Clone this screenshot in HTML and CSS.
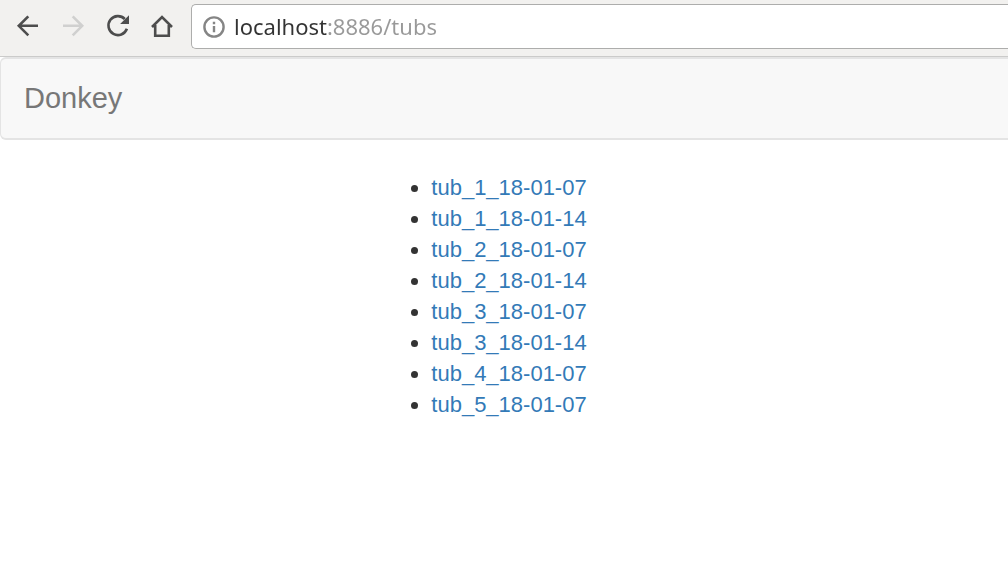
FILE: index.html
```html
<!DOCTYPE html>
<html lang="en">
<head>
<meta charset="utf-8">
<meta name="viewport" content="width=device-width, initial-scale=1">
<title>Donkey</title>
<link rel="stylesheet" href="styles.css">
</head>
<body>
<div class="toolbar">
  <button class="tool" type="button" aria-label="Back">
    <svg viewBox="0 0 24 24"><path d="M22 11.8H3M12.3 2.3L2.8 11.8l9.5 9.5"/></svg>
  </button>
  <button class="tool" type="button" aria-label="Forward" disabled>
    <svg viewBox="0 0 24 24"><path d="M2 11.8h19M11.7 2.3l9.5 9.5-9.5 9.5"/></svg>
  </button>
  <button class="tool" type="button" aria-label="Reload">
    <svg viewBox="0 0 24 24"><path d="M18.8 5A9.5 9.5 0 1 0 20.9 14.8"/><path class="solid" d="M23 1.2v8.9h-8.9z"/></svg>
  </button>
  <button class="tool" type="button" aria-label="Home">
    <svg viewBox="0 0 24 24"><path d="M1 13L11 3l10 10M4.2 11v10.8h13.6V11"/></svg>
  </button>
  <div class="address">
    <svg class="info" viewBox="0 0 22 22" aria-hidden="true"><circle cx="11" cy="11" r="9.6"/><path d="M11 10v6.2M11 5.8v2.4"/></svg>
    <input class="url" type="text" value="localhost:8886/tubs" aria-label="Address" spellcheck="false">
  </div>
</div>
<nav class="navbar"><a class="brand" href="#">Donkey</a></nav>
<main class="content">
  <ul class="tubs">
    <li><a href="#">tub_1_18-01-07</a></li>
    <li><a href="#">tub_1_18-01-14</a></li>
    <li><a href="#">tub_2_18-01-07</a></li>
    <li><a href="#">tub_2_18-01-14</a></li>
    <li><a href="#">tub_3_18-01-07</a></li>
    <li><a href="#">tub_3_18-01-14</a></li>
    <li><a href="#">tub_4_18-01-07</a></li>
    <li><a href="#">tub_5_18-01-07</a></li>
  </ul>
</main>
</body>
</html>
```
FILE: styles.css
```css
* {
  box-sizing: border-box;
}

body {
  margin: 0;
  background: #fff;
  color: #333;
  font-family: "Liberation Sans", Arial, sans-serif;
  font-size: 22px;
  line-height: 31px;
}

a {
  color: #337ab7;
  text-decoration: none;
}

.toolbar {
  display: flex;
  align-items: flex-start;
  padding: 4px 0 7px 5px;
  background: #f2f1ef;
  border-bottom: 1px solid #cbcbca;
}

.tool {
  display: flex;
  flex: none;
  align-items: center;
  justify-content: center;
  width: 45px;
  height: 44px;
  padding: 0;
  border: 0;
  background: none;
  color: #4d4d4d;
}

.tool:disabled {
  color: #d0d0cf;
}

.tool svg {
  width: 24px;
  height: 24px;
  fill: none;
  stroke: currentColor;
  stroke-width: 2.6;
}

.tool .solid {
  fill: currentColor;
  stroke: none;
}

.address {
  display: flex;
  flex: 1;
  align-items: center;
  gap: 9px;
  height: 45px;
  margin-left: 6px;
  padding-left: 11px;
  border: 1px solid #adadac;
  border-right: 0;
  border-radius: 5px 0 0 5px;
  background: #fff;
}

.info {
  flex: none;
  width: 22px;
  height: 22px;
  fill: none;
  stroke: #858585;
  stroke-width: 2.4;
}

/* The host is dark and the rest of the address is grey. */
.url {
  flex: 1;
  min-width: 0;
  height: 36px;
  padding: 0 0 2px;
  border: 0;
  outline: 0;
  background: linear-gradient(to right, #333 93px, #999 93px);
  background-clip: text;
  -webkit-background-clip: text;
  color: transparent;
  font-family: "Noto Sans", "Open Sans", sans-serif;
  font-size: 22px;
}

.navbar {
  padding: 24px 23px;
  border: 2px solid #e4e4e4;
  border-width: 2px 0 2px 1px;
  border-radius: 6px 0 0 6px;
  background: #f8f8f8;
}

.brand {
  display: block;
  color: #777;
  font-size: 29px;
}

.content {
  display: flex;
  justify-content: center;
  padding-top: 32px;
}

.tubs {
  margin: 0;
  padding-left: 10px;
}
```
